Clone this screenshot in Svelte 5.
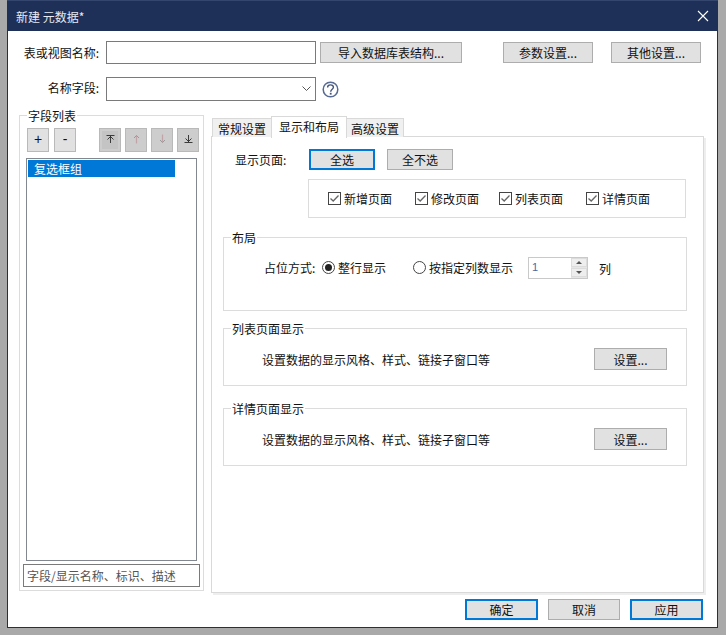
<script>
  let pageChecks = [
    { label: "新增页面", w: 87 },
    { label: "修改页面", w: 84 },
    { label: "列表页面", w: 87 },
    { label: "详情页面", w: 64 }
  ];
  let tabs = ["常规设置", "显示和布局", "高级设置"];
  let activeTab = 1;
</script>

<div class="window">
  <div class="titlebar">
    <span class="title">新建 元数据*</span>
    <svg class="close" width="12" height="12" viewBox="0 0 12 12"><path d="M1 1L11 11M11 1L1 11" stroke="#fff" stroke-width="1.1" fill="none"/></svg>
  </div>

  <div class="row first">
    <label class="rowlabel" for="tablename">表或视图名称:</label>
    <input id="tablename" class="field" />
    <button class="btn import">导入数据库表结构...</button>
    <button class="btn param">参数设置...</button>
    <button class="btn other">其他设置...</button>
  </div>

  <div class="row second">
    <span class="rowlabel">名称字段:</span>
    <div class="field combo">
      <svg width="9" height="6" viewBox="0 0 9 6"><path d="M0.5 0.5L4.5 4.5L8.5 0.5" stroke="#555" fill="none"/></svg>
    </div>
    <svg class="help" width="17" height="17" viewBox="0 0 17 17">
      <circle cx="8.5" cy="8.5" r="7.3" stroke="#566a94" stroke-width="1.5" fill="none"/>
      <path d="M5.600 6.500C5.600 4.700 7 3.900 8.500 3.900C10.100 3.900 11.400 4.800 11.400 6.300C11.400 8.200 8.700 8.300 8.700 10.700" stroke="#44557c" stroke-width="1.400" fill="none"/>
      <rect x="7.800" y="11.800" width="1.800" height="1.800" fill="#44557c"/>
    </svg>
  </div>

  <div class="main">
    <div class="group fields">
      <span class="legend">字段列表</span>
      <div class="toolbar">
        <button class="tool">+</button>
        <button class="tool minus">-</button>
        <button class="tool off pressed">
          <svg width="9" height="10" viewBox="0 0 9 10"><path d="M0.500 1.500H8.500M4.500 9V2M1.500 5.500L4.500 2.500L7.500 5.500" stroke="#2a2a2a" stroke-width="0.9" fill="none"/></svg>
        </button>
        <button class="tool off">
          <svg width="7" height="10" viewBox="0 0 7 10"><path d="M3.500 9.500V1.500" stroke="#c2a4a8" stroke-width="1.200" fill="none"/><path d="M1 4L3.500 1.500L6 4" stroke="#9a9a9a" fill="none"/></svg>
        </button>
        <button class="tool off">
          <svg width="7" height="10" viewBox="0 0 7 10"><path d="M3.500 0.500V8.500" stroke="#c2a4a8" stroke-width="1.200" fill="none"/><path d="M1 6L3.500 8.500L6 6" stroke="#9a9a9a" fill="none"/></svg>
        </button>
        <button class="tool off">
          <svg width="9" height="10" viewBox="0 0 9 10"><path d="M0.500 8.500H8.500M4.500 1V8M1.500 4.500L4.500 7.500L7.500 4.500" stroke="#2a2a2a" stroke-width="0.9" fill="none"/></svg>
        </button>
      </div>
      <div class="list">
        <div class="item">复选框组</div>
      </div>
      <input class="search" placeholder="字段/显示名称、标识、描述" />
    </div>

    <div class="right">
      <div class="tabs">
        {#each tabs as tab, i}
          <div class="tab" class:active={i === activeTab}>{tab}</div>
        {/each}
      </div>
      <div class="panel">
        <div class="pages">
          <span class="pages-label">显示页面:</span>
          <button class="btn select-btn primary">全选</button>
          <button class="btn select-btn">全不选</button>
        </div>
        <div class="checks">
          {#each pageChecks as c}
            <span class="check" style="width:{c.w}px">
              <span class="box">
                <svg width="11" height="11" viewBox="0 0 11 11"><path d="M1.500 5.500L4.200 8L9.500 2.500" stroke="#666" stroke-width="1.300" fill="none"/></svg>
              </span>
              {c.label}
            </span>
          {/each}
        </div>

        <div class="group layout">
          <span class="legend">布局</span>
          <div class="layout-row">
            <span class="place">占位方式:</span>
            <span class="radio on"></span>
            <span class="radio-text">整行显示</span>
            <span class="radio second-radio"></span>
            <span class="radio-text">按指定列数显示</span>
            <div class="spinner">
              <span class="spin-value">1</span>
              <div class="spin-btns">
                <span class="spin-btn"><i class="up"></i></span>
                <span class="spin-btn"><i class="down"></i></span>
              </div>
            </div>
            <span class="unit">列</span>
          </div>
        </div>

        <div class="group section list-section">
          <span class="legend">列表页面显示</span>
          <span>设置数据的显示风格、样式、链接子窗口等</span>
          <button class="btn set">设置...</button>
        </div>

        <div class="group section detail-section">
          <span class="legend">详情页面显示</span>
          <span>设置数据的显示风格、样式、链接子窗口等</span>
          <button class="btn set">设置...</button>
        </div>
      </div>
    </div>
  </div>

  <div class="footer">
    <button class="btn foot primary">确定</button>
    <button class="btn foot cancel">取消</button>
    <button class="btn foot primary">应用</button>
  </div>
</div>

<style>
  :global(body) {
    background: #a9a9a9;
    overflow: hidden;
  }

  .window {
    margin-left: 7px;
    width: 711px;
    height: 628px;
    box-sizing: border-box;
    background: #fff;
    border: 1px solid #1f3058;
    border-top: 0;
    font-family: "Noto Sans CJK SC", "Liberation Sans", sans-serif;
    font-size: 12px;
    color: #111;
  }

  .titlebar {
    height: 31px;
    margin: 0 -1px;
    padding: 0 9px;
    background: #1f3058;
    border-top: 1px solid #34466d;
    box-sizing: border-box;
    display: flex;
    align-items: center;
    justify-content: space-between;
    color: #e6eaf2;
  }
  .title { font-size: 12px; }

  .row { display: flex; align-items: center; }
  .first { margin-top: 10px; height: 23px; }
  .second { margin-top: 13px; height: 24px; }
  .second .rowlabel { margin-bottom: 3px; }

  .rowlabel {
    width: 91px;
    margin-right: 7px;
    text-align: right;
    white-space: nowrap;
  }

  .field {
    width: 210px;
    height: 100%;
    box-sizing: border-box;
    border: 1px solid #7a7a7a;
    background: #fff;
    padding: 0;
    outline: none;
  }

  .combo {
    display: flex;
    align-items: center;
    justify-content: flex-end;
    padding-right: 4px;
  }

  .help { margin-left: 6px; }

  .btn {
    height: 21px;
    box-sizing: border-box;
    padding: 0;
    background: #e1e1e1;
    border: 1px solid #adadad;
    font: inherit;
    color: #111;
  }
  .btn.primary { border: 2px solid #0078d7; }

  .import { width: 142px; margin-left: 4px; }
  .param { width: 90px; margin-left: 41px; }
  .other { width: 90px; margin-left: 18px; }

  .main {
    display: flex;
    align-items: flex-start;
    margin-top: 14px;
    padding-left: 11px;
  }

  .group {
    position: relative;
    box-sizing: border-box;
    border: 1px solid #dcdcdc;
  }
  .legend {
    position: absolute;
    left: 7px;
    top: -9px;
    padding: 0 1px;
    line-height: 17px;
    background: #fff;
    white-space: nowrap;
  }

  .fields {
    width: 185px;
    height: 476px;
    display: flex;
    flex-direction: column;
  }

  .toolbar {
    display: flex;
    margin: 12px 0 0 7px;
  }
  .tool {
    width: 22px;
    height: 24px;
    margin-right: 5px;
    padding: 0 0 2px;
    box-sizing: border-box;
    display: flex;
    align-items: center;
    justify-content: center;
    background: #e1e1e1;
    border: 1px solid #b9b9b9;
    font: 14px "Liberation Sans", sans-serif;
    color: #111;
  }
  .tool.minus { margin-right: 23px; }
  .tool.off { background: #cdcdcd; margin-right: 4px; }
  .tool.pressed { background: #c4c4c4; box-shadow: inset 0 0 0 2px #cdcdcd; }

  .list {
    width: 171px;
    height: 403px;
    margin: 6px 0 0 6px;
    padding: 1px;
    box-sizing: border-box;
    border: 1px solid #828790;
  }
  .item {
    width: 147px;
    height: 17px;
    line-height: 17px;
    padding-left: 6px;
    box-sizing: border-box;
    background: #0078d7;
    color: #fff;
  }

  .search {
    width: 177px;
    height: 23px;
    margin: 3px 0 0 3px;
    padding: 0 3px;
    box-sizing: border-box;
    border: 1px solid #7a7a7a;
    font: inherit;
    outline: none;
  }
  .search::placeholder { color: #555; opacity: 1; }

  .right {
    margin-left: 7px;
    margin-top: 1px;
  }

  .tabs {
    display: flex;
    align-items: flex-end;
    height: 21px;
    padding-left: 1px;
  }
  .tab {
    box-sizing: border-box;
    height: 19px;
    padding: 0 5px;
    line-height: 20px;
    background: #f0f0f0;
    border: 1px solid #d9d9d9;
    border-bottom: 0;
    margin-right: -1px;
  }
  .tab:last-child { padding: 0 4px; }
  .tab.active {
    position: relative;
    z-index: 1;
    height: 22px;
    margin-bottom: -1px;
    padding: 0 7px;
    background: #fff;
  }

  .panel {
    width: 493px;
    height: 457px;
    margin-top: -1px;
    padding: 12px 0 0 11px;
    box-sizing: border-box;
    border: 1px solid #d9d9d9;
    box-shadow: 2px 2px 0 #eeeeee;
    background: #fff;
  }

  .pages { display: flex; align-items: center; padding-left: 12px; }
  .pages-label { width: 74px; white-space: nowrap; }
  .select-btn { width: 66px; }
  .select-btn + .select-btn { margin-left: 12px; }

  .checks {
    display: flex;
    align-items: center;
    width: 378px;
    height: 39px;
    margin: 9px 0 0 85px;
    padding-left: 19px;
    box-sizing: border-box;
    border: 1px solid #dcdcdc;
  }
  .check {
    display: flex;
    align-items: center;
    flex: none;
    white-space: nowrap;
  }
  .box {
    width: 13px;
    height: 13px;
    margin-right: 3px;
    box-sizing: border-box;
    border: 1px solid #444;
    background: #fff;
    display: flex;
  }

  .layout {
    width: 464px;
    height: 74px;
    margin-top: 19px;
  }
  .layout-row {
    display: flex;
    align-items: center;
    height: 22px;
    margin-top: 19px;
    padding-left: 40px;
  }
  .place { width: 58px; white-space: nowrap; margin-bottom: 2px; }
  .radio {
    width: 13px;
    height: 13px;
    margin: 0 3px 2px 0;
    box-sizing: border-box;
    border: 1px solid #444;
    border-radius: 50%;
    background: #fff;
    position: relative;
  }
  .radio.on::after {
    content: "";
    position: absolute;
    left: 2px;
    top: 2px;
    width: 7px;
    height: 7px;
    border-radius: 50%;
    background: #222;
  }
  .radio-text { white-space: nowrap; margin-bottom: 2px; }
  .second-radio { margin-left: 27px; }

  .spinner {
    width: 60px;
    height: 22px;
    margin-left: 15px;
    box-sizing: border-box;
    border: 1px solid #c9c9c9;
    display: flex;
    justify-content: space-between;
  }
  .spin-value {
    padding-left: 3px;
    font: 11px/18px "Liberation Sans", sans-serif;
    color: #4a68a8;
  }
  .spin-btns {
    width: 16px;
    display: flex;
    flex-direction: column;
    gap: 1px;
    padding-bottom: 1px;
    background: #e6e6e6;
  }
  .spin-btn {
    flex: 1;
    display: flex;
    align-items: center;
    justify-content: center;
    background: #eeeeee;
    border: 1px solid #dcdcdc;
  }
  .up, .down {
    width: 0;
    height: 0;
    border-left: 3px solid transparent;
    border-right: 3px solid transparent;
  }
  .up { border-bottom: 3px solid #555; }
  .down { border-top: 3px solid #555; }
  .unit { margin-left: 11px; }

  .section {
    width: 464px;
    height: 58px;
    display: flex;
    align-items: center;
    justify-content: space-between;
    padding: 4px 19px 0 38px;
  }
  .list-section { margin-top: 17px; }
  .detail-section { margin-top: 22px; }
  .set { width: 73px; height: 22px; }

  .footer {
    display: flex;
    gap: 10px;
    justify-content: flex-end;
    margin-top: 6px;
    padding-right: 14px;
  }
  .foot { width: 73px; }
  .foot.cancel { width: 72px; }
</style>
